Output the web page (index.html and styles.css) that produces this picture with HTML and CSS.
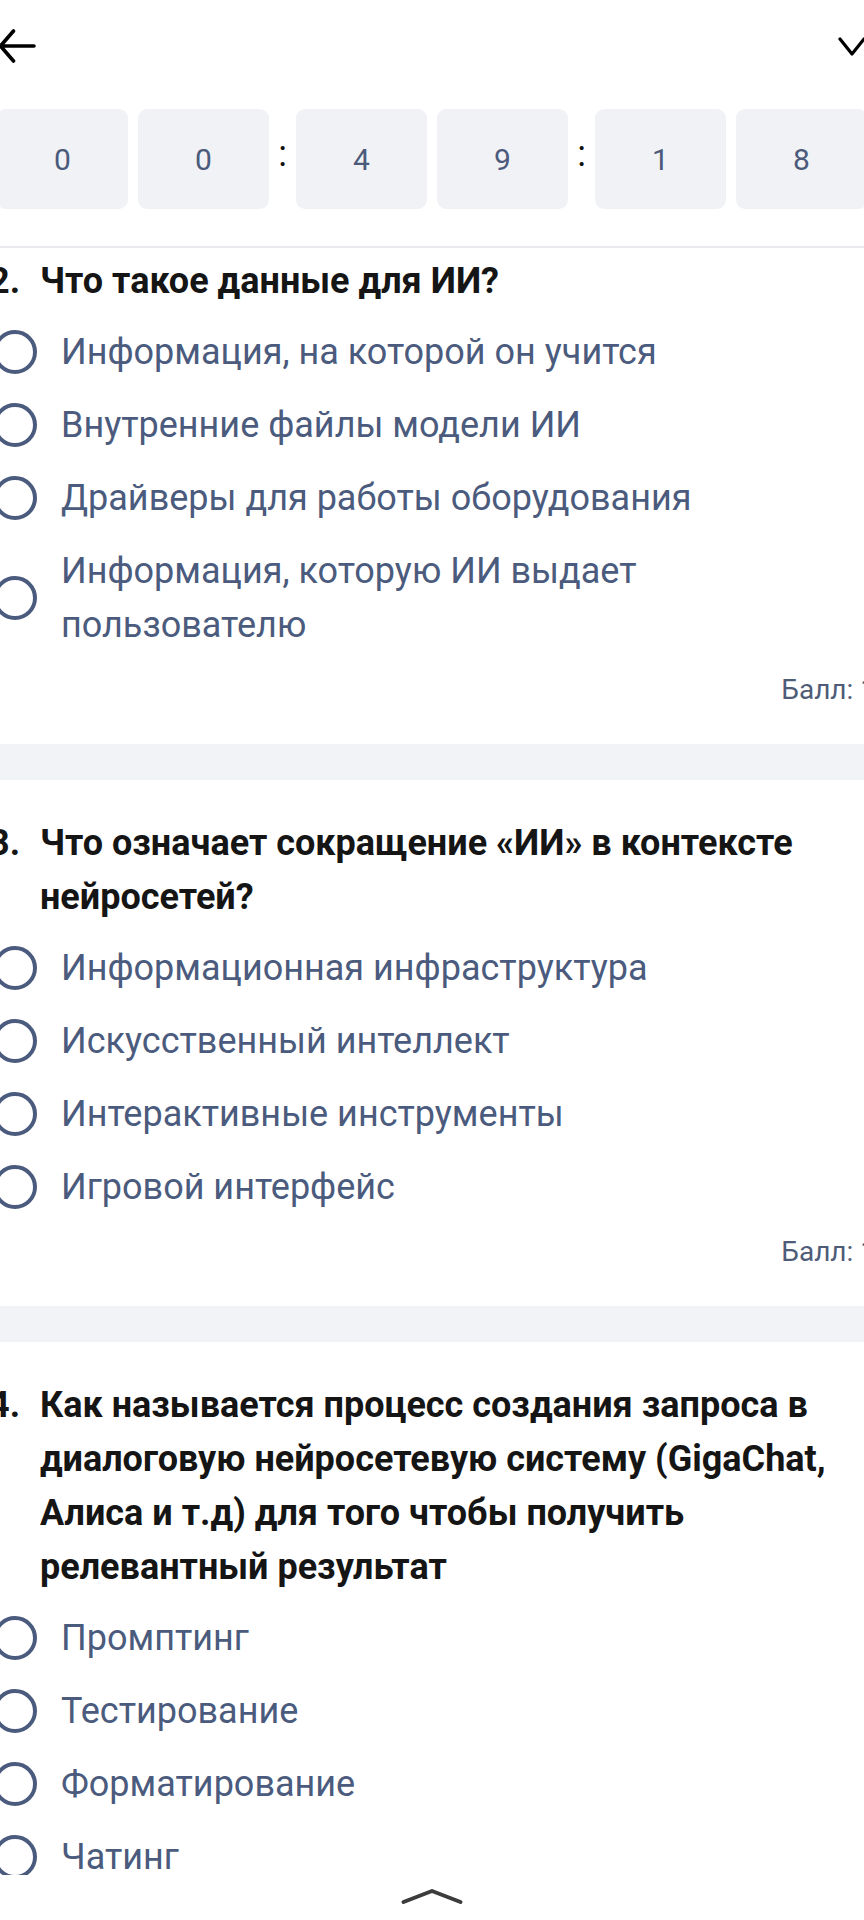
FILE: index.html
```html
<!DOCTYPE html>
<html lang="ru">
<head>
<meta charset="utf-8">
<title>Тест</title>
<link rel="stylesheet" href="styles.css">
</head>
<body>
<div class="page">
  <header class="topbar">
    <div class="nav">
      <svg class="icon-back" width="40" height="40" viewBox="0 0 40 40" aria-label="Назад">
        <path d="M2.5 20 H36 M15.5 5 L2.5 20 L15.5 35" fill="none" stroke="#000" stroke-width="3.6" stroke-linecap="round" stroke-linejoin="round"/>
      </svg>
      <svg class="icon-down" width="32" height="24" viewBox="0 0 32 24" aria-label="Свернуть">
        <path d="M4 5 L16 20 L28 5" fill="none" stroke="#000" stroke-width="3.2" stroke-linecap="round" stroke-linejoin="round"/>
      </svg>
    </div>
    <div class="timer">
      <div class="cell">0</div>
      <div class="cell">0</div>
      <div class="colon">:</div>
      <div class="cell">4</div>
      <div class="cell">9</div>
      <div class="colon">:</div>
      <div class="cell">1</div>
      <div class="cell">8</div>
    </div>
  </header>

  <section class="question question-first">
    <h2 class="q-head"><span class="q-num">2.</span><span class="q-text">Что такое данные для ИИ?</span></h2>
    <div class="options">
      <div class="opt"><span class="radio"></span><span class="opt-text">Информация, на которой он учится</span></div>
      <div class="opt"><span class="radio"></span><span class="opt-text">Внутренние файлы модели ИИ</span></div>
      <div class="opt"><span class="radio"></span><span class="opt-text">Драйверы для работы оборудования</span></div>
      <div class="opt"><span class="radio"></span><span class="opt-text">Информация, которую ИИ выдает пользователю</span></div>
    </div>
    <div class="score">Балл: 1</div>
  </section>
  <div class="sep"></div>

  <section class="question">
    <h2 class="q-head"><span class="q-num">3.</span><span class="q-text">Что означает сокращение «ИИ» в контексте нейросетей?</span></h2>
    <div class="options">
      <div class="opt"><span class="radio"></span><span class="opt-text">Информационная инфраструктура</span></div>
      <div class="opt"><span class="radio"></span><span class="opt-text">Искусственный интеллект</span></div>
      <div class="opt"><span class="radio"></span><span class="opt-text">Интерактивные инструменты</span></div>
      <div class="opt"><span class="radio"></span><span class="opt-text">Игровой интерфейс</span></div>
    </div>
    <div class="score">Балл: 1</div>
  </section>
  <div class="sep"></div>

  <section class="question">
    <h2 class="q-head"><span class="q-num">4.</span><span class="q-text">Как называется процесс создания запроса в диалоговую нейросетевую систему (GigaChat, Алиса и т.д) для того чтобы получить релевантный результат</span></h2>
    <div class="options">
      <div class="opt"><span class="radio"></span><span class="opt-text">Промптинг</span></div>
      <div class="opt"><span class="radio"></span><span class="opt-text">Тестирование</span></div>
      <div class="opt"><span class="radio"></span><span class="opt-text">Форматирование</span></div>
      <div class="opt"><span class="radio"></span><span class="opt-text">Чатинг</span></div>
    </div>
    <div class="score">Балл: 1</div>
  </section>
</div>

<div class="bottom-sheet">
  <svg width="64" height="20" viewBox="0 0 64 20" aria-label="Развернуть">
    <path d="M3.5 15 L32 4 L60.5 15" fill="none" stroke="#3c3c3c" stroke-width="4" stroke-linecap="round" stroke-linejoin="round"/>
  </svg>
</div>
</body>
</html>
```

FILE: styles.css
```css
* { box-sizing: border-box; }

html, body {
  margin: 0;
  padding: 0;
  background: #ffffff;
}

body {
  width: 864px;
  height: 1920px;
  overflow: hidden;
  font-family: Roboto, "Noto Sans", "Liberation Sans", sans-serif;
  color: #151515;
}

.page {
  width: 864px;
}

/* ---------- header ---------- */
.topbar {
  padding-top: 26px;
  padding-bottom: 37px;
  border-bottom: 2px solid #e9eaed;
}

.nav {
  display: flex;
  justify-content: space-between;
  align-items: center;
  height: 40px;
  margin-left: -2px;
  margin-right: -4px;
}

.nav svg { display: block; flex: none; }

.timer {
  display: flex;
  justify-content: center;
  margin: 43px -3px 0 -3px;
  height: 100px;
}

.cell {
  flex: none;
  width: 131px;
  height: 100px;
  border-radius: 9px;
  background: #f0f2f5;
  display: flex;
  align-items: center;
  justify-content: center;
  font-size: 30px;
  font-weight: 400;
  color: #4b5a7b;
}

.cell + .cell { margin-left: 10px; }

.colon {
  flex: none;
  width: 27px;
  display: flex;
  align-items: center;
  justify-content: center;
  font-size: 36px;
  line-height: 36px;
  padding-bottom: 11px;
  color: #111;
}

/* ---------- questions ---------- */
.question {
  padding: 36px 0 36px;
}

.question-first {
  padding-top: 6px;
}

.q-head {
  display: flex;
  margin: 0 0 0 -11px;
  font-size: 36px;
  line-height: 54px;
  font-weight: 700;
  color: #151515;
}

.q-num {
  flex: none;
  width: 51px;
}

.q-text {
  flex: 1;
  min-width: 0;
}

.options {
  margin-top: 7.5px;
}

.opt {
  display: flex;
  align-items: center;
  gap: 24px;
  margin-left: -7px;
  padding: 9.5px 0;
  font-size: 36px;
  line-height: 54px;
  font-weight: 400;
  color: #4b5b7d;
}

.radio {
  flex: none;
  width: 44px;
  height: 44px;
  border-radius: 50%;
  border: 4.8px solid #4b5b7d;
}

.opt-text {
  flex: 1;
  min-width: 0;
}

.score {
  margin-top: 10.5px;
  margin-right: -12px;
  text-align: right;
  font-size: 28px;
  line-height: 36px;
  color: #4f5c78;
}

.sep {
  height: 36px;
  background: #f1f3f6;
}

/* ---------- bottom overlay ---------- */
.bottom-sheet {
  position: fixed;
  left: 0;
  right: 0;
  bottom: 0;
  height: 45px;
  background: #ffffff;
  display: flex;
  justify-content: center;
  align-items: flex-start;
  padding-top: 12px;
}

.bottom-sheet svg { display: block; }
```
